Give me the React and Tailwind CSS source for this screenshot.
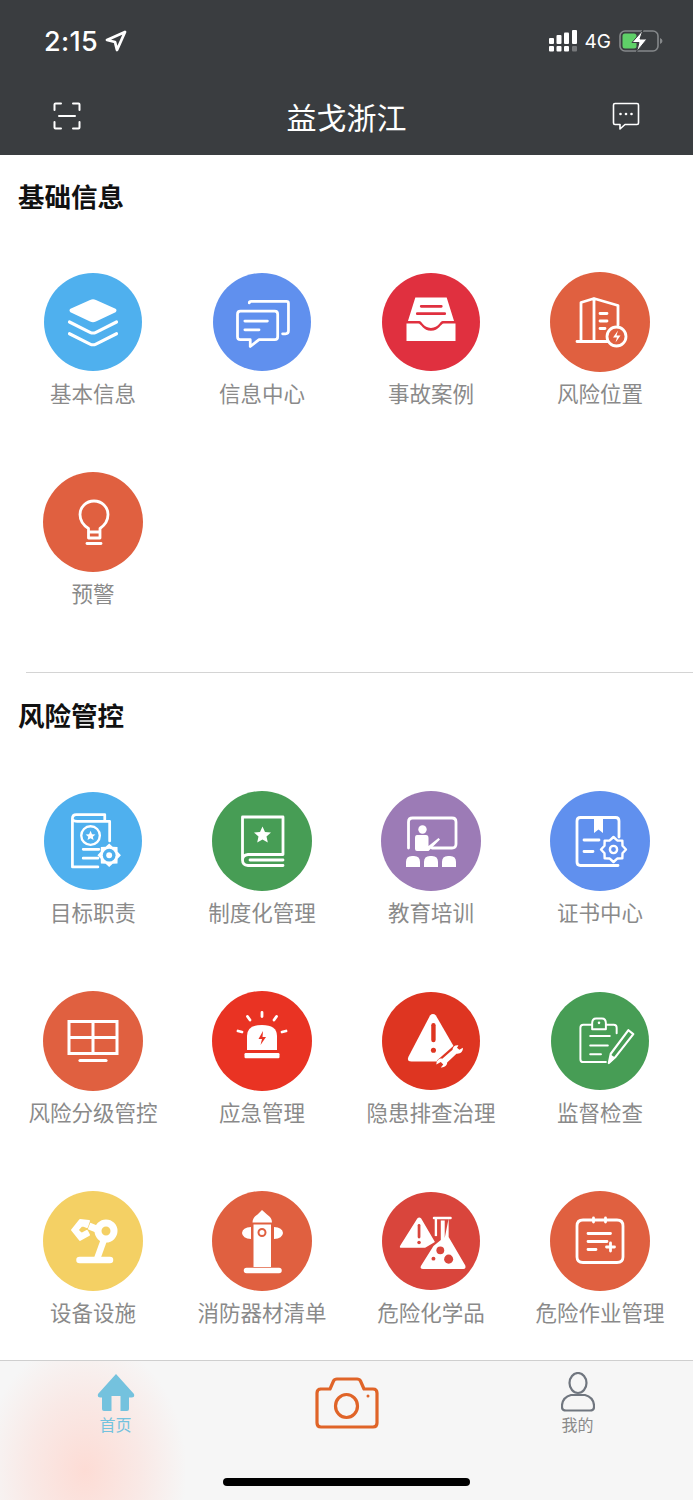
import React from "react";

const Line = (p) => <path fill="none" stroke="#fff" strokeWidth="2.8" strokeLinecap="round" strokeLinejoin="round" {...p} />;

const gearPath = (cx, cy, r) => {
  const pts = [];
  for (let i = 0; i < 16; i++) {
    const a = (i * Math.PI) / 8;
    const rr = i % 2 === 0 ? r : r * 0.78;
    pts.push(`${(cx + rr * Math.cos(a)).toFixed(2)} ${(cy + rr * Math.sin(a)).toFixed(2)}`);
  }
  return `M${pts.join("L")}Z`;
};

const Layers = () => (
  <>
    <path d="M47 27.5Q50 26 53 27.5L73 36.5Q75 38 73 40L53 49.5Q50 51 47 49.5L27 40Q25 38 27 36.5Z" fill="#fff" />
    <Line d="M26 50L47 60.5Q50 62 53 60.5L74 50" strokeWidth="3.2" />
    <Line d="M26 62L47 72.5Q50 74 53 72.5L74 62" strokeWidth="3.2" />
  </>
);
const Chats = () => (
  <>
    <Line d="M37 30.5Q37 29 39 29H75Q77 29 77 31V59Q77 62 74 62H71" />
    <Line d="M28 39H63Q66 39 66 42V65Q66 68 63 68H47L38 75V68H28Q25 68 25 65V42Q25 39 28 39Z" />
    <Line d="M32.5 49H55.5M32.5 58H47" />
  </>
);
const Inbox = () => (
  <>
    <path d="M34 25H66L73.5 49H62C59 49 58 56 50 56C42 56 41 49 38 49H26.5Z" fill="#fff" />
    <path d="M25 51.5H37C40 51.5 42 59 50 59C58 59 60 51.5 63 51.5H75V69.5H25Z" fill="#fff" />
    <path d="M40 34H60.5M36 41.5H64" stroke="#e0303f" strokeWidth="2.8" fill="none" strokeLinecap="round" />
  </>
);
const Building = () => (
  <>
    <Line d="M27 69.5H58M31 69V30.5L44 26.5L68 33.5V53M44 27V69M50 41.5H57M50 49H57M50 56.5H55" />
    <circle cx="66.5" cy="64.5" r="9.5" fill="none" stroke="#fff" strokeWidth="2.8" />
    <path d="M68 58.5L63 65.5H67L65.5 70.5L70.5 63.5H66.5Z" fill="#fff" />
  </>
);
const Bulb = () => (
  <>
    <Line d="M45.5 56.5C40 53 37 48 37 42.5C37 35 43 29 51 29C59 29 65 35 65 42.5C65 48 62 53 57 56.5V66H45.5ZM45.5 60H57" />
    <Line d="M44 71.5H58" />
  </>
);
const BookGear = () => (
  <>
    <Line d="M55 76.5H29V27Q29 23 33 23H62V29M29 28Q30 30 34 30H67V50" />
    <circle cx="47.5" cy="44.5" r="9.5" fill="none" stroke="#fff" strokeWidth="2.4" />
    <path d="M47.5 39.5L49 43L52.5 43.3L49.8 45.6L50.6 49L47.5 47.2L44.4 49L45.2 45.6L42.5 43.3L46 43Z" fill="#fff" />
    <Line d="M40 58.5H56M40 67.5H55" />
    <path d={gearPath(66.5, 64.5, 12)} fill="#fff" />
    <circle cx="66.5" cy="64.5" r="6.5" fill="#4fb0ee" />
    <circle cx="66.5" cy="64.5" r="3" fill="#fff" />
  </>
);
const StarBook = () => (
  <>
    <Line d="M71 63.5H36Q30.5 64 30.5 69T36 74.5H71M30.5 69V26H71V63.5M38 69H71" />
    <path d="M50.5 35.5L53 41L59 41.6L54.5 45.6L55.8 51.5L50.5 48.5L45.2 51.5L46.5 45.6L42 41.6L48 41Z" fill="#fff" />
  </>
);
const Teacher = () => (
  <>
    <Line d="M27.5 57V31Q27.5 27 31.5 27H71Q75 27 75 31V53Q75 57 71 57H51" />
    <circle cx="41.5" cy="38.5" r="4.2" fill="#fff" />
    <path d="M36 44H45Q47.5 44 47.5 47V55L57.5 47L59 48.5L47.5 60H36Q34 60 34 58V47Q34 44 36 44Z" fill="#fff" />
    <path d="M25 76V71Q25 65 31 65H33Q39 65 39 71V76ZM43 76V71Q43 65 49 65H51Q57 65 57 71V76ZM61 76V71Q61 65 67 65H69Q75 65 75 71V76Z" fill="#fff" />
  </>
);
const CertBook = () => (
  <>
    <Line d="M69 46V30Q69 26.5 65.5 26.5H30.5Q27 26.5 27 30V71Q27 74.5 30.5 74.5H68" />
    <path d="M44 27H53V42L48.5 38.5L44 42Z" fill="#fff" />
    <Line d="M34 49H49M34 60.5H43" />
    <path d={gearPath(63.5, 58.5, 12.5)} fill="none" stroke="#fff" strokeWidth="2.4" strokeLinejoin="round" />
    <circle cx="63.5" cy="58.5" r="3.6" fill="none" stroke="#fff" strokeWidth="2.4" />
  </>
);
const Monitor = () => (
  <>
    <path d="M26 30.5H74V62.5H26ZM50 30.5V62.5M26 46.5H74" fill="none" stroke="#fff" strokeWidth="3" />
    <Line d="M37 69.5H63" strokeWidth="3.2" />
  </>
);
const Alarm = () => (
  <>
    <path d="M35 59V45Q35 34 50 34Q65 34 65 45V59Z" fill="#fff" />
    <rect x="32.5" y="62" width="35" height="5.2" rx="1.2" fill="#fff" />
    <path d="M51 40L46.5 48H50L48.5 54L54 46H50.5Z" fill="#e93323" />
    <Line d="M50 21.5V25.5M35.5 25.5L38 29M64.5 25.5L62 29M26 40L30 41M74 40L70 41" />
  </>
);
const WarnWrench = () => (
  <>
    <path d="M49 24Q52 21 55 24L74 57L58 71H30Q25 71 27 66Z" fill="#fff" />
    <path d="M56 70L74 54L80 62L64 78Z" fill="#de3521" />
    <path d="M52.5 34V49" stroke="#de3521" strokeWidth="4.5" strokeLinecap="round" />
    <circle cx="52.5" cy="59.5" r="2.6" fill="#de3521" />
    <path d="M78 54.5C74.5 54 72 56 72 59L61.5 68C58 67.5 55.5 70 55.5 74L60 71.5L62.5 74L60 77C63.5 77.5 66.5 75 66.5 72L76 63C80 63.5 83 60.5 82.5 57L79 59L76.5 57Z" fill="#fff" />
  </>
);
const Clipboard = () => (
  <>
    <Line d="M42 33.5H33Q30 33.5 30 36.5V68.5Q30 71.5 33 71.5H56M56 33.5H64Q67 33.5 67 36.5V42" strokeWidth="2" />
    <Line d="M42 38V32Q42 27 46 27H52Q56 27 56 32V38H42Z" strokeWidth="2" />
    <circle cx="49" cy="31.5" r="1.3" fill="#fff" />
    <Line d="M40 45H60M40 54.5H58M40 63.5H51" strokeWidth="2" />
    <path d="M79 39L84 43L66 66L59 72.5L61 63Z" fill="none" stroke="#fff" strokeWidth="2.2" strokeLinejoin="round" />
    <path d="M61 64L59 73L66 67Z" fill="#fff" />
  </>
);
const Robot = () => (
  <>
    <path d="M36.5 69H67" stroke="#fff" strokeWidth="6.5" strokeLinecap="round" />
    <path d="M54 68L60.5 50" stroke="#fff" strokeWidth="6.5" />
    <circle cx="63" cy="40" r="8" fill="none" stroke="#fff" strokeWidth="7" />
    <path d="M56 39L46 35" stroke="#fff" strokeWidth="7" />
    <path d="M46 30L37 29L29 39L37 49L46 44L44 40L38.5 43L34.5 39L39 34L44 36Z" fill="#fff" stroke="#fff" strokeWidth="2" strokeLinejoin="round" />
  </>
);
const Hydrant = () => (
  <>
    <path d="M50 19L55 23.5Q60 26.5 60 31.5H40.5Q40.5 26.5 45.5 23.5Z" fill="#fff" />
    <path d="M41.5 33.5H59V76H41.5Z" fill="#fff" />
    <path d="M39 36Q30.5 36.5 30 42Q30.5 47.5 39 48ZM62 36Q70.5 36.5 71 42Q70.5 47.5 62 48Z" fill="#fff" />
    <path d="M34.5 79.5H67" stroke="#fff" strokeWidth="5.5" strokeLinecap="round" />
    <circle cx="50" cy="41.5" r="3.5" fill="none" stroke="#e06040" strokeWidth="2" />
  </>
);
const Flask = () => (
  <>
    <path d="M36 27Q38 25 40 27L54 51L44 57H20Q17 57 19 54Z" fill="#fff" />
    <path d="M37.8 34V46" stroke="#d9453c" strokeWidth="2.8" strokeLinecap="round" />
    <circle cx="37.8" cy="51.5" r="1.8" fill="#d9453c" />
    <path d="M53 26.5H70" stroke="#fff" strokeWidth="2.4" strokeLinecap="round" />
    <path d="M55 27V45" stroke="#fff" strokeWidth="2.4" />
    <path d="M68 27V46L85 75Q86 78.5 83 78.5H42Q38 78.5 40 75L52.5 55L60 49V29H64V47Z" fill="#fff" />
    <circle cx="59.5" cy="59.5" r="4" fill="#d9453c" />
    <circle cx="68" cy="68.5" r="4.6" fill="#d9453c" />
    <circle cx="52.5" cy="68" r="2" fill="#d9453c" />
  </>
);
const Calendar = () => (
  <>
    <Line d="M33 29H67Q73 29 73 35V66Q73 71.5 67 71.5H33Q27 71.5 27 66V35Q27 29 33 29Z" />
    <Line d="M43.5 27V31M55.5 27V31" />
    <Line d="M38 42.5H60.5M38 50.5H57M38 58.5H46M60.5 52V60M56.5 56H64.5" />
  </>
);

const Icon = ({ bg, size, art: Art }) => (
  <div className={`${size} ${bg} rounded-full shrink-0`}>
    <svg viewBox="0 0 100 100" className="w-full h-full block">
      <Art />
    </svg>
  </div>
);

const Cell = ({ label, bg, size, art }) => (
  <div className="h-[200px] pt-[50px] flex flex-col items-center">
    <div className="h-[100px] flex items-center justify-center">
      <Icon bg={bg} size={size} art={art} />
    </div>
    <div className="mt-[6px] leading-[30px] text-[21.5px] text-[#8a8a8a] whitespace-nowrap">{label}</div>
  </div>
);

const basic = [
  { label: "基本信息", bg: "bg-[#4fb0ee]", size: "w-[98px] h-[98px]", art: Layers },
  { label: "信息中心", bg: "bg-[#6090ee]", size: "w-[98px] h-[98px]", art: Chats },
  { label: "事故案例", bg: "bg-[#e0303f]", size: "w-[98px] h-[98px]", art: Inbox },
  { label: "风险位置", bg: "bg-[#e06040]", size: "w-[100px] h-[100px]", art: Building },
  { label: "预警", bg: "bg-[#e06040]", size: "w-[100px] h-[100px]", art: Bulb },
];
const risk = [
  { label: "目标职责", bg: "bg-[#4fb0ee]", size: "w-[98px] h-[98px]", art: BookGear },
  { label: "制度化管理", bg: "bg-[#479d55]", size: "w-[100px] h-[100px]", art: StarBook },
  { label: "教育培训", bg: "bg-[#9c7bb6]", size: "w-[100px] h-[100px]", art: Teacher },
  { label: "证书中心", bg: "bg-[#6090ee]", size: "w-[100px] h-[100px]", art: CertBook },
  { label: "风险分级管控", bg: "bg-[#e06040]", size: "w-[100px] h-[100px]", art: Monitor },
  { label: "应急管理", bg: "bg-[#e93323]", size: "w-[100px] h-[100px]", art: Alarm },
  { label: "隐患排查治理", bg: "bg-[#de3521]", size: "w-[98px] h-[98px]", art: WarnWrench },
  { label: "监督检查", bg: "bg-[#479d55]", size: "w-[98px] h-[98px]", art: Clipboard },
  { label: "设备设施", bg: "bg-[#f4d064]", size: "w-[100px] h-[100px]", art: Robot },
  { label: "消防器材清单", bg: "bg-[#e06040]", size: "w-[100px] h-[100px]", art: Hydrant },
  { label: "危险化学品", bg: "bg-[#d9453c]", size: "w-[98px] h-[98px]", art: Flask },
  { label: "危险作业管理", bg: "bg-[#e06040]", size: "w-[100px] h-[100px]", art: Calendar },
];

const Grid = ({ items }) => (
  <div className="grid grid-cols-4 px-[8.5px] mt-[8px]">
    {items.map((it) => (
      <Cell key={it.label} {...it} />
    ))}
  </div>
);

const Signal = () => (
  <svg width="28" height="22" viewBox="0 0 28 22" fill="#fff">
    <rect x="0" y="8" width="5" height="6" rx="1" /><rect x="0" y="16" width="5" height="5.5" rx="1" />
    <rect x="7.5" y="5" width="5" height="9" rx="1" /><rect x="7.5" y="16" width="5" height="5.5" rx="1" />
    <rect x="15" y="2.5" width="5" height="11.5" rx="1" /><rect x="15" y="16" width="5" height="5.5" rx="1" />
    <rect x="23" y="0" width="5" height="14" rx="1" /><rect x="23" y="16" width="5" height="5.5" rx="1" fill="#77797b" />
  </svg>
);
const Battery = () => (
  <svg width="45" height="22" viewBox="0 0 45 22">
    <rect x="1" y="1" width="38" height="20" rx="5" fill="none" stroke="#85888a" strokeWidth="1.6" />
    <path d="M41 8Q43.5 9 43.5 11T41 14Z" fill="#85888a" />
    <rect x="3.5" y="3.5" width="14" height="15" rx="2.5" fill="#5fd068" />
    <path d="M24 0L13 12.5H20L17.5 22L28 9H21Z" fill="#fff" stroke="#3a3d40" strokeWidth="1" />
  </svg>
);

export default function App() {
  return (
    <div className="relative w-[693px] h-[1500px] overflow-hidden bg-white flex flex-col font-['Noto_Sans_CJK_SC','Liberation_Sans',sans-serif]">
      <header className="h-[155px] shrink-0 bg-[#3a3d40] text-white flex flex-col">
        <div className="h-[82px] flex items-center justify-between pl-[44px] pr-[29px]">
          <div className="flex items-center gap-[7px]">
            <span className="text-[27px] font-medium leading-none font-['Inter',sans-serif] tracking-[0.3px]">2:15</span>
            <svg width="22" height="22" viewBox="0 0 22 22" fill="none" stroke="#fff" strokeWidth="2.8" strokeLinejoin="round">
              <path d="M20 2L2 10L10 12L12 20Z" />
            </svg>
          </div>
          <div className="flex items-center">
            <Signal />
            <span className="ml-[8px] mr-[8px] text-[19px] leading-none font-['Inter',sans-serif] text-white">4G</span>
            <Battery />
          </div>
        </div>
        <div className="flex-1 flex items-center justify-between pl-[53px] pr-[53px] pb-[5px]">
          <svg width="28" height="28" viewBox="0 0 28 28" fill="none" stroke="#fff" strokeWidth="2" strokeLinecap="round" strokeLinejoin="round">
            <path d="M8 1.5H2.5Q1.5 1.5 1.5 2.5V8M20 1.5H25.5Q26.5 1.5 26.5 2.5V8M1.5 20V25.5Q1.5 26.5 2.5 26.5H8M26.5 20V25.5Q26.5 26.5 25.5 26.5H20M6 14H22" />
          </svg>
          <h1 className="text-[30px] leading-none font-normal">益戈浙江</h1>
          <svg width="28" height="28" viewBox="0 0 28 28" fill="none">
            <path d="M3 1.5H25Q26.5 1.5 26.5 3V21Q26.5 22.5 25 22.5H13L8 27V22.5H3Q1.5 22.5 1.5 21V3Q1.5 1.5 3 1.5Z" stroke="#fff" strokeWidth="1.6" strokeLinejoin="round" />
            <circle cx="8.5" cy="12" r="1.3" fill="#fff" /><circle cx="14" cy="12" r="1.3" fill="#fff" /><circle cx="19.5" cy="12" r="1.3" fill="#fff" />
          </svg>
        </div>
      </header>

      <main className="flex-1 min-h-0 overflow-hidden">
        <section>
          <h2 className="pl-[18px] pt-[23px] text-[26.5px] leading-[36px] font-bold text-[#111]">基础信息</h2>
          <Grid items={basic} />
        </section>
        <div className="mt-[50px] ml-[26px] h-px bg-[#d4d4d4]" />
        <section>
          <h2 className="pl-[18px] pt-[24px] text-[26.5px] leading-[36px] font-bold text-[#111]">风险管控</h2>
          <Grid items={risk} />
        </section>
      </main>

      <nav className="relative h-[140px] shrink-0 bg-[#f6f6f6] border-t border-[#cfcfcf] overflow-hidden">
        <div className="absolute left-[-15px] top-[-20px] w-[200px] h-[260px] bg-[radial-gradient(ellipse_at_center,#fddcd5_0%,#f9e9e6_40%,transparent_72%)]" />
        <div className="relative grid grid-cols-3 px-0 pt-[12px]">
          <div className="flex flex-col items-center">
            <svg width="38" height="38" viewBox="0 0 38 38" fill="#74c2de">
              <path d="M19 1L37 21Q38 24.5 34.5 24.5H32V36Q32 38 30 38H23.5V23H14.5V38H7Q5 38 5 36V24.5H3.5Q0 24.5 1 21Z" />
            </svg>
            <span className="mt-[2px] text-[16px] leading-[22px] text-[#74c2de]">首页</span>
          </div>
          <div className="flex justify-center pt-[4px]">
            <svg width="64" height="52" viewBox="0 0 64 52" fill="none" stroke="#e06428" strokeWidth="3.2" strokeLinejoin="round">
              <path d="M5 12H15L18.5 4Q19.5 2 22 2H42Q44.5 2 45.5 4L49 12H58Q62 12 62 16V46Q62 50 58 50H6Q2 50 2 46V16Q2 12 6 12Z" />
              <ellipse cx="31.5" cy="29" rx="11" ry="11.5" />
              <circle cx="53" cy="19" r="1.5" fill="#e06428" stroke="none" />
            </svg>
          </div>
          <div className="flex flex-col items-center">
            <svg width="34" height="40" viewBox="0 0 34 40" fill="none" stroke="#70767f" strokeWidth="2.2" className="-mt-[1px]">
              <ellipse cx="17" cy="11" rx="8.5" ry="10" />
              <path d="M10 23H24Q32 25 33 33V35Q33 38.5 29 38.5H5Q1 38.5 1 35V33Q2 25 10 23Z" />
            </svg>
            <span className="mt-[1px] text-[16px] leading-[22px] text-[#8a8a8a]">我的</span>
          </div>
        </div>
        <div className="absolute left-[223px] top-[117px] w-[247px] h-[8px] rounded-full bg-black" />
      </nav>
    </div>
  );
}
